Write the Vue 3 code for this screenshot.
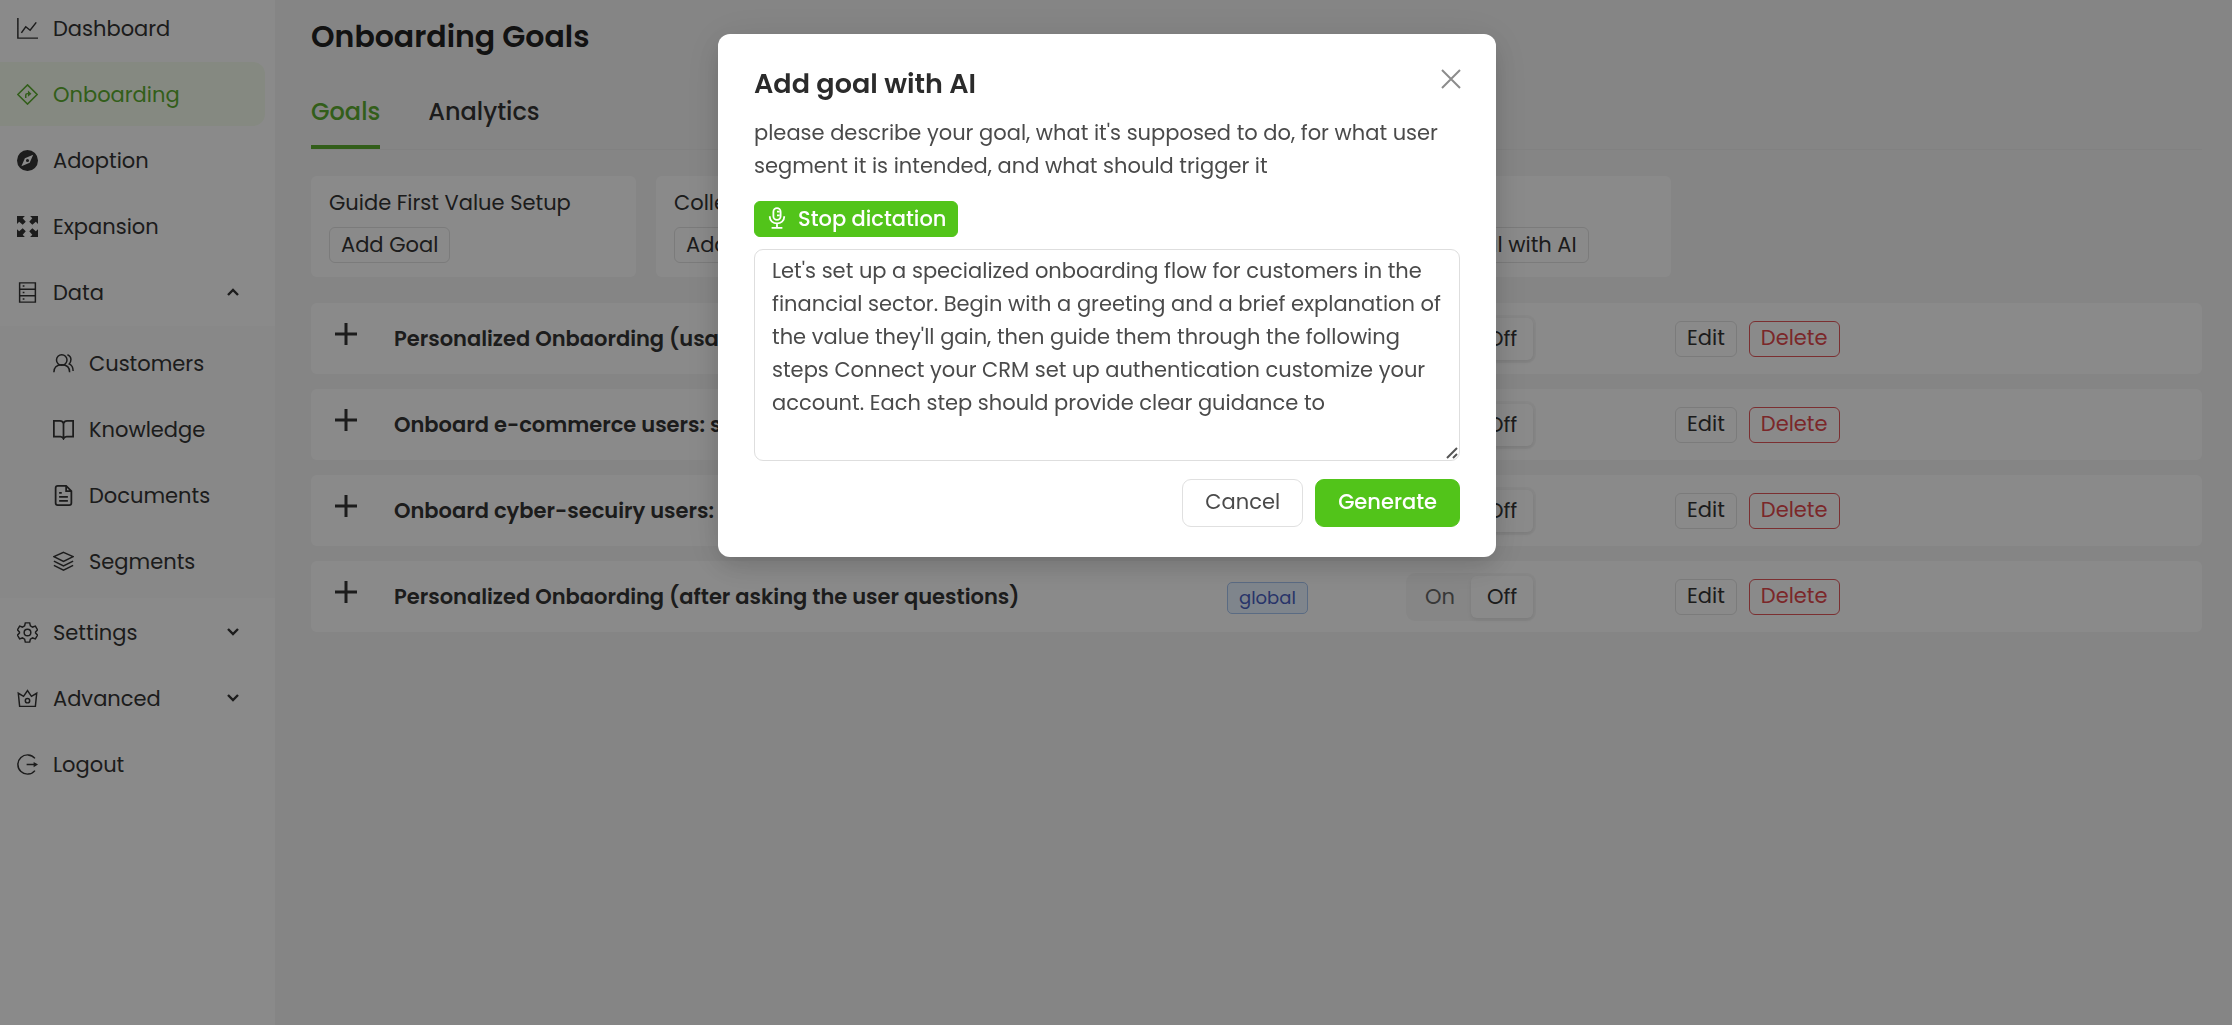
<template>
  <div class="layout">
    <aside class="sidebar">
      <nav class="menu">
        <template v-for="item in menu" :key="item.label">
          <a href="#" class="menu-item" :class="{ active: item.active }">
            <svg class="icon" viewBox="0 0 24 24" v-html="icons[item.icon]"></svg>
            <span class="menu-label">{{ item.label }}</span>
            <svg v-if="item.toggle" class="chevron" :class="{ open: item.children }" viewBox="0 0 14 14">
              <path d="M2 4l5 5 5-5" />
            </svg>
          </a>
          <div v-if="item.children" class="submenu">
            <a v-for="child in item.children" :key="child.label" href="#" class="menu-item">
              <svg class="icon" viewBox="0 0 24 24" v-html="icons[child.icon]"></svg>
              <span class="menu-label">{{ child.label }}</span>
            </a>
          </div>
        </template>
      </nav>
    </aside>

    <main class="content">
      <h1>Onboarding Goals</h1>
      <div class="tabs" role="tablist">
        <button class="tab selected" role="tab" aria-selected="true">Goals</button>
        <button class="tab" role="tab" aria-selected="false">Analytics</button>
      </div>

      <div class="cards">
        <section v-for="card in cards" :key="card.title" class="card">
          <p>{{ card.title }}</p>
          <button class="btn small">{{ card.action }}</button>
        </section>
      </div>

      <ul class="goals">
        <li v-for="goal in goals" :key="goal.id" class="goal">
          <button class="expand" :aria-label="`Expand ${goal.title}`">
            <svg viewBox="0 0 22 22"><path d="M11 0v22M0 11h22" /></svg>
          </button>
          <strong>{{ goal.title }}</strong>
          <div><span v-if="goal.scope" class="tag">{{ goal.scope }}</span></div>
          <div class="state">
            <div class="segmented">
              <label>
                <input v-model="goal.state" type="radio" :name="`state-${goal.id}`" value="on" />
                <span>On</span>
              </label>
              <label>
                <input v-model="goal.state" type="radio" :name="`state-${goal.id}`" value="off" />
                <span>Off</span>
              </label>
            </div>
          </div>
          <div class="row-actions">
            <button class="btn small">Edit</button>
            <button class="btn small danger">Delete</button>
          </div>
        </li>
      </ul>
    </main>

    <div class="mask">
      <div class="modal" role="dialog" aria-modal="true" aria-labelledby="modal-title">
        <h2 id="modal-title">Add goal with AI</h2>
        <button class="close" aria-label="Close">
          <svg viewBox="0 0 20 20"><path d="M1 1l18 18M19 1L1 19" /></svg>
        </button>
        <label class="hint" for="goal-prompt">
          please describe your goal, what it's supposed to do, for what user segment it is intended,
          and what should trigger it
        </label>
        <button class="btn small primary dictate">
          <svg viewBox="0 0 20 24">
            <rect x="6" y="1" width="8" height="13" rx="4" />
            <path d="M2 10v1a8 7 0 0 0 16 0v-1M10 18v4M4 23h12M10 5h3M10 9h3" />
          </svg>
          Stop dictation
        </button>
        <div class="prompt">
          <textarea id="goal-prompt" v-model="prompt"></textarea>
          <svg class="grip" viewBox="0 0 12 12"><path d="M1 11L11 1M7 11l4-4" /></svg>
        </div>
        <footer>
          <button class="btn">Cancel</button>
          <button class="btn primary">Generate</button>
        </footer>
      </div>
    </div>
  </div>
</template>

<script setup>
import { ref } from "vue";

const icons = {
  chart: '<path d="M1 0v23h23M5 17l5-7 5 4 7-9"/>',
  direction:
    '<path d="M12 1l11 11-11 11L1 12z"/><path d="M10 16v-3q0-2 2-2h2"/><path d="M12.5 7.5l4 3.500-4 3.500z" fill="currentColor" stroke="none"/>',
  compass:
    '<path fill="currentColor" stroke="none" fill-rule="evenodd" d="M12 0a12 12 0 1 1 0 24 12 12 0 0 1 0-24zM18.5 5.500l-9.500 4-4 9 9.500-4zM12 10.200a1.800 1.800 0 1 1 0 3.600 1.800 1.800 0 0 1 0-3.600z"/>',
  expand:
    '<g fill="currentColor" stroke="none"><path d="M0 0h9L6.500 2.500 10 6.500 6.500 10 2.500 6.500 0 9z"/><path d="M24 0v9l-2.500-2.500-4 3.500L14 6.500l3.500-4L15 0z"/><path d="M0 24v-9l2.500 2.500 4-3.500 3.500 3.500-3.500 4L9 24z"/><path d="M24 24h-9l2.500-2.500-3.500-4 3.500-3.500 4 3.500L24 15z"/></g>',
  database:
    '<path d="M3 1h18v22H3zM3 8.300h18M3 15.600h18M6.500 4.700h2M6.500 12h2M6.500 19.300h2"/>',
  users:
    '<circle cx="10" cy="8" r="6"/><path d="M1 22c0-5 3-8.500 9-8.500s9 3.500 9 8.500M16.500 2q4 1.500 4 5.500 0 3-2 5 4.500 2 4.500 8"/>',
  book: '<path d="M12 5q-1-3-4-3H1v18h7.500q2.500 0 3.500 2.500Q13 20 15.500 20H23V2h-7q-3 0-4 3zM12 5v17" stroke-width="2"/>',
  file: '<path d="M15 1H5.500Q3 1 3 3.500v17Q3 23 5.500 23h13q2.500 0 2.500-2.500V7zM15 1v6h6M7 9h3M7 13.500h10M7 18h10" stroke-width="2"/>',
  layers:
    '<path d="M12 1.500l11 5-11 5.500L1 6.500zM1 11.500L12 17l11-5.500M1 16.500L12 22l11-5.500"/>',
  setting:
    '<path d="M9.500 1h5l.8 3.400 2.500 1.400L21 4.700l2.500 4.300-2.300 2.400v1.200l2.300 2.400-2.500 4.300-3.200-1.100-2.500 1.400-.8 3.400h-5l-.8-3.400-2.500-1.400L3 19.300.500 15l2.300-2.400v-1.200L.500 9 3 4.700l3.200 1.100 2.500-1.400z"/><circle cx="12" cy="12" r="3.800"/>',
  crown:
    '<path d="M1.500 6l6 3.500L12 3l4.500 6.500 6-3.500L21 21H3z"/><circle cx="12" cy="14.500" r="2.500"/>',
  logout:
    '<path d="M20.500 5A11 11 0 1 0 20.500 19M11 12h10"/><path d="M19 9l5 3-5 3z" fill="currentColor" stroke="none"/>',
};

const menu = [
  { label: "Dashboard", icon: "chart" },
  { label: "Onboarding", icon: "direction", active: true },
  { label: "Adoption", icon: "compass" },
  { label: "Expansion", icon: "expand" },
  {
    label: "Data",
    icon: "database",
    toggle: true,
    children: [
      { label: "Customers", icon: "users" },
      { label: "Knowledge", icon: "book" },
      { label: "Documents", icon: "file" },
      { label: "Segments", icon: "layers" },
    ],
  },
  { label: "Settings", icon: "setting", toggle: true },
  { label: "Advanced", icon: "crown", toggle: true },
  { label: "Logout", icon: "logout" },
];

const cards = [
  { title: "Guide First Value Setup", action: "Add Goal" },
  { title: "Collect Info", action: "Add Goal" },
  { title: "Adoption", action: "Add Goal" },
  { title: "Custom", action: "Create Goal with AI" },
];

const goals = ref([
  { id: 1, title: "Personalized Onbaording (usage)", state: "off" },
  { id: 2, title: "Onboard e-commerce users: s", state: "off" },
  { id: 3, title: "Onboard cyber-secuiry users:", state: "off" },
  {
    id: 4,
    title: "Personalized Onbaording (after asking the user questions)",
    scope: "global",
    state: "off",
  },
]);

const prompt = ref(
  "Let's set up a specialized onboarding flow for customers in the financial sector. Begin with a greeting and a brief explanation of the value they'll gain, then guide them through the following steps Connect your CRM set up authentication customize your account. Each step should provide clear guidance to"
);
</script>

<style>
body {
  background: #f3f3f3;
}
</style>

<style scoped>
.layout {
  display: flex;
  min-height: 100vh;
  overflow: hidden;
  background: #f3f3f3;
  color: #333;
  font-family: Poppins, Inter, sans-serif;
  font-size: 21px;
  line-height: 33px;
}
h1,
h2,
p,
ul {
  margin: 0;
  padding: 0;
}
button,
textarea {
  font: inherit;
  color: inherit;
  box-sizing: border-box;
}
svg {
  fill: none;
  stroke: currentColor;
  flex: none;
}
.sidebar {
  flex: none;
  width: 275px;
  background: #fcfcfc;
}
.menu {
  display: flex;
  flex-direction: column;
  gap: 2px;
  margin-top: -4px;
}
.menu-item {
  display: flex;
  align-items: center;
  gap: 15px;
  height: 64px;
  margin-right: 10px;
  padding: 0 25px 0 17px;
  box-sizing: border-box;
  border-radius: 0 12px 12px 0;
  color: #333;
  text-decoration: none;
}
.menu-item.active {
  background: #f2faeb;
  color: #5cac30;
}
.menu-label {
  flex: 1;
}
.icon {
  width: 21px;
  height: 21px;
  stroke-width: 1.7;
}
.chevron {
  width: 14px;
  height: 14px;
  stroke-width: 2.4;
}
.chevron.open {
  transform: rotate(180deg);
}
.submenu {
  display: flex;
  flex-direction: column;
  gap: 2px;
  padding: 5px 0;
  background: #f7f7f7;
}
.submenu .menu-item {
  padding-left: 53px;
}
.content {
  flex: 1;
  min-width: 0;
  padding: 16px 30px 0 36px;
}
h1 {
  color: #222;
  font-size: 30px;
  font-weight: 600;
  line-height: 42px;
}
.tabs {
  display: flex;
  gap: 48px;
  margin-top: 36px;
  border-bottom: 1px solid #ececec;
}
.tab {
  height: 55px;
  padding: 0 0 17px;
  border: 0;
  border-bottom: 4px solid transparent;
  background: none;
  font-size: 24px;
  font-weight: 500;
}
.tab.selected {
  border-color: #5cac30;
  color: #5cac30;
}
.cards {
  display: grid;
  grid-template-columns: repeat(4, 325px);
  gap: 20px;
  margin-top: 26px;
}
.card {
  padding: 10px 18px 14px;
  border-radius: 6px;
  background: #fcfcfc;
}
.card .btn {
  margin-top: 8px;
}
.btn {
  display: flex;
  align-items: center;
  justify-content: center;
  height: 48px;
  padding: 0 22px 3px;
  border: 1px solid #e0e0e0;
  border-radius: 9px;
  background: #fff;
  white-space: nowrap;
}
.btn.small {
  height: 36px;
  padding: 0 11px 2px;
  border-radius: 6px;
}
.btn.primary {
  border-color: #52c41a;
  background: #52c41a;
  color: #fff;
  font-weight: 500;
}
.btn.danger {
  border-color: #e0565a;
  color: #e0484c;
}
.content .btn {
  background: #fcfcfc;
}
.goals {
  display: flex;
  flex-direction: column;
  gap: 15px;
  margin-top: 26px;
  list-style: none;
}
.goal {
  display: grid;
  grid-template-columns: 83px 833fr 179fr 269fr 527fr;
  align-items: center;
  height: 71px;
  border-radius: 6px;
  background: #fcfcfc;
}
.goal strong {
  font-weight: 600;
}
.expand {
  display: flex;
  width: 46px;
  padding: 0 0 10px 24px;
  border: 0;
  background: none;
  box-sizing: content-box;
}
.expand svg {
  width: 22px;
  height: 22px;
  stroke-width: 3;
}
.tag {
  display: inline-block;
  padding: 0 11px;
  border: 1px solid #a5c3ee;
  border-radius: 5px;
  background: #e8f2ff;
  color: #4a60c0;
  font-size: 18px;
  line-height: 30px;
}
.state {
  display: flex;
}
.segmented {
  display: flex;
  padding: 3px;
  border-radius: 9px;
  background: #f4f4f4;
}
.segmented label {
  position: relative;
}
.segmented input {
  position: absolute;
  inset: 0;
  margin: 0;
  opacity: 0;
}
.segmented span {
  display: block;
  padding: 0 16px;
  border-radius: 6px;
  color: #666;
  line-height: 42px;
}
.segmented input:checked + span {
  background: #fcfcfc;
  color: #333;
  box-shadow: 0 2px 4px rgba(0, 0, 0, 0.08);
}
.row-actions {
  display: flex;
  gap: 12px;
}
.mask {
  position: fixed;
  inset: 0;
  display: flex;
  justify-content: center;
  align-items: flex-start;
  padding: 34px 18px 0 0;
  background: rgba(0, 0, 0, 0.45);
}
.modal {
  position: relative;
  width: 778px;
  padding: 32px 36px 30px;
  box-sizing: border-box;
  border-radius: 12px;
  background: #fff;
  color: #4a4a4a;
  box-shadow: 0 9px 24px rgba(0, 0, 0, 0.12), 0 4px 42px rgba(0, 0, 0, 0.1);
}
h2 {
  color: #2b2b2b;
  font-size: 27px;
  font-weight: 600;
  line-height: 36px;
}
.close {
  position: absolute;
  top: 30px;
  right: 30px;
  display: flex;
  padding: 5px;
  border: 0;
  background: none;
  color: #8c8c8c;
}
.close svg {
  width: 20px;
  height: 20px;
  stroke-width: 2;
}
.hint {
  display: block;
  margin: 14px 0 19px;
}
.dictate {
  gap: 12px;
}
.dictate svg {
  width: 18px;
  height: 22px;
  margin-left: 2px;
  stroke-width: 2;
}
.prompt {
  position: relative;
  margin: 12px 0 18px;
}
textarea {
  display: block;
  width: 100%;
  height: 212px;
  padding: 4px 17px;
  border: 1px solid #dedede;
  border-radius: 9px;
  outline: 0;
  resize: none;
}
.grip {
  position: absolute;
  right: 2px;
  bottom: 2px;
  width: 12px;
  height: 12px;
  color: #555;
  stroke-width: 2;
}
footer {
  display: flex;
  justify-content: flex-end;
  gap: 12px;
}
</style>
